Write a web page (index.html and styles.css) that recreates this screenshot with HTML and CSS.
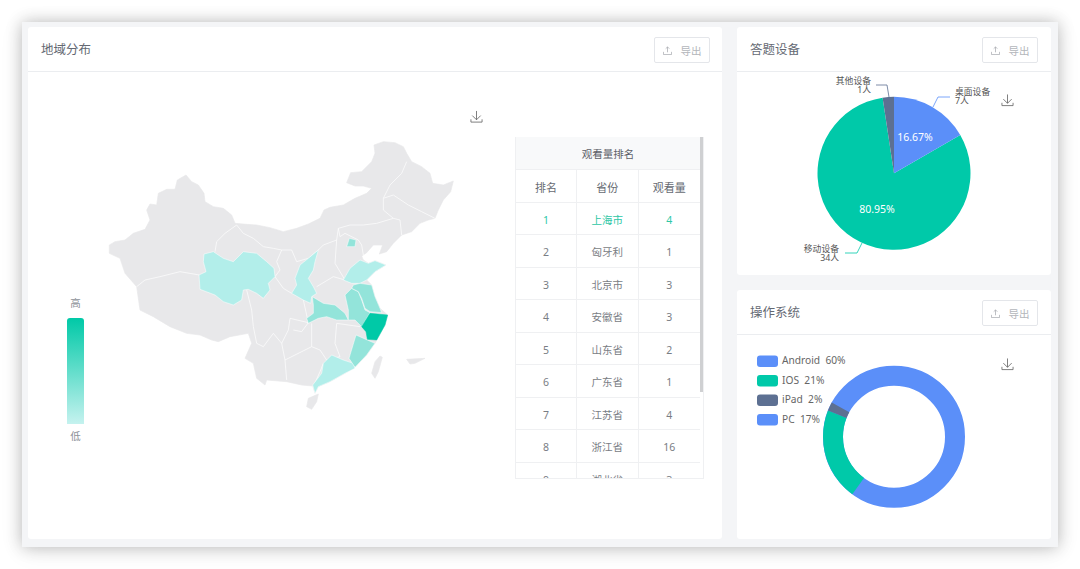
FILE: index.html
```html
<!DOCTYPE html>
<html lang="zh-CN">
<head>
<meta charset="utf-8">
<title>数据统计</title>
<link rel="stylesheet" href="styles.css">
</head>
<body>
<main class="frame">
  <section class="card card-map">
    <header class="card-head">
      <h2 class="card-title">地域分布</h2>
      <button class="export"><svg class="up-icon" viewBox="0 0 10 10"><path d="M5 7V1M3 3l2-2 2 2M.5 6.500v3h9v-3"/></svg>导出</button>
    </header>
    <div class="map-body">
      <div class="scale">
        <span>高</span>
        <div class="scale-bar"></div>
        <span>低</span>
      </div>
      <svg class="map" viewBox="0 0 1110 870">
        <path class="land" d="M28 345L45 335 75 330 100 310 135 298 150 270 140 240 150 222 170 225 175 190 200 178 225 178 232 150 258 135 275 155 295 165 312 190 315 215 340 230 370 235 395 255 405 280 440 283 470 285 510 293 550 305 590 295 625 282 660 265 672 240 690 232 730 225 765 205 800 190 815 175 790 168 765 168 740 158 752 128 785 125 815 95 825 70 822 45 850 35 885 38 910 50 920 70 935 95 965 110 990 130 998 160 1030 165 1060 153 1052 185 1030 210 1015 240 1005 265 985 270 960 280 935 305 905 315 880 340 860 365 838 372 848 345 820 345 800 368 785 378 790 390 805 400 825 392 858 405 825 425 800 450 815 465 825 500 840 535 863 555 855 585 825 640 800 675 765 712 735 730 690 755 655 770 645 790 638 768 605 765 560 755 500 750 495 765 470 745 460 700 435 685 455 640 445 610 390 620 355 635 335 630 300 615 260 610 210 590 160 560 120 540 110 470 75 430 60 385 28 370Z"/>
        <path class="land" d="M625 805L655 792 650 815 635 838 620 830ZM840 678L847 682 835 725 825 745 815 730 825 695ZM920 688L975 685 945 700 930 702Z"/>
        <path class="line" d="M110 470L135 450 180 440 240 425 298 435M345 365L350 335 375 310 410 285 430 310 460 325 490 350 520 355 545 360 575 360 590 395 625 385 655 360 670 345 710 330 715 295 750 285 790 285 830 280 880 265 900 270 905 315M850 205L850 240 880 265M850 205L880 195 925 225 965 245 1005 265M850 205L870 165 905 130 920 95M715 295L720 320 735 310 775 330 785 345 790 375M545 360L530 395 540 420 525 440 550 475 575 490M710 330L705 400 735 450M650 470L700 440 735 450M440 480L455 540 460 590 470 640 490 650 520 610 545 640 565 600 570 565 625 578 610 510M625 578L605 605 580 600M545 640L555 690 635 650 660 660 680 690 720 680 705 640 710 580 780 590M635 580L635 650M555 690L560 750M670 700L660 725 640 770"/>
        <path class="tint-a" d="M312 372L340 365 370 385 400 395 430 365 470 370 500 395 522 415 525 440 505 460 510 480 490 505 470 490 445 478 430 480 425 510 400 525 370 515 345 495 300 478 297 435 318 425 310 395Z"/>
        <path class="tint-a" d="M655 360L645 395 640 420 625 445 640 470 650 490 635 500 632 520 610 510 575 490 590 465 585 445 600 405 625 385Z"/>
        <path class="tint-a" d="M730 450L750 415 780 390 805 400 825 392 858 405 825 425 800 450 780 460 755 460Z"/>
        <path class="tint-a" d="M670 700L695 675 730 690 760 700 765 715 735 730 690 755 655 770 645 790 638 765 665 730Z"/>
        <path class="tint-b" d="M748 325L768 330 765 350 740 350Z"/>
        <path class="tint-b" d="M637 500L670 520 705 525 735 550 745 570 710 570 680 560 655 565 625 580 620 565 640 550 640 525Z"/>
        <path class="tint-b" d="M735 495L755 475 775 485 785 510 795 540 810 548 785 590 765 570 745 570 745 540Z"/>
        <path class="tint-b" d="M780 460L815 465 825 500 840 535 845 548 810 545 795 535 785 505 775 485 755 475 760 465Z"/>
        <path class="tint-b" d="M768 615L802 630 825 640 800 675 765 712 747 685Z"/>
        <path class="tint-c" d="M785 590L810 550 863 555 855 585 830 630 802 628 798 605Z"/>
      </svg>
      <svg class="save map-save" viewBox="0 0 14 14"><path d="M7 .5V10M2.500 5.500L7 10l4.500-4.500M1 9.500v3h12v-3"/></svg>
      <div class="rank">
        <div class="rank-inner">
          <div class="rank-title">观看量排名</div>
          <div class="rank-row rank-head"><span>排名</span><span>省份</span><span>观看量</span></div>
          <div class="rank-row rank-first"><span>1</span><span>上海市</span><span>4</span></div>
          <div class="rank-row"><span>2</span><span>匈牙利</span><span>1</span></div>
          <div class="rank-row"><span>3</span><span>北京市</span><span>3</span></div>
          <div class="rank-row"><span>4</span><span>安徽省</span><span>3</span></div>
          <div class="rank-row"><span>5</span><span>山东省</span><span>2</span></div>
          <div class="rank-row"><span>6</span><span>广东省</span><span>1</span></div>
          <div class="rank-row"><span>7</span><span>江苏省</span><span>4</span></div>
          <div class="rank-row"><span>8</span><span>浙江省</span><span>16</span></div>
          <div class="rank-row"><span>9</span><span>湖北省</span><span>3</span></div>
        </div>
        <div class="rank-thumb"></div>
      </div>
    </div>
  </section>
  <div class="side">
    <section class="card card-device">
      <header class="card-head">
        <h2 class="card-title">答题设备</h2>
        <button class="export"><svg class="up-icon" viewBox="0 0 10 10"><path d="M5 7V1M3 3l2-2 2 2M.5 6.500v3h9v-3"/></svg>导出</button>
      </header>
      <svg class="chart" viewBox="737 72 314 203">
        <path class="c-green" d="M894 173.300L960.250 135.050A76.500 76.500 0 1 1 882.600 97.650Z"/>
        <path class="c-blue" d="M894 173.300V96.800A76.500 76.500 0 0 1 960.250 135.050Z"/>
        <path class="c-gray" d="M894 173.300L882.600 97.650A76.500 76.500 0 0 1 894 96.800Z"/>
        <path class="lead lead-gray" d="M876 85H887L889 97"/>
        <path class="lead lead-blue" d="M933 107L938 97H950"/>
        <path class="lead lead-green" d="M862 243L857 253H845"/>
        <text class="lbl end" x="871" y="84">其他设备</text>
        <text class="lbl end" x="871" y="92.500">1人</text>
        <text class="lbl" x="955" y="95">桌面设备</text>
        <text class="lbl" x="955" y="103.500">7人</text>
        <text class="lbl end" x="839" y="252">移动设备</text>
        <text class="lbl end" x="839" y="261">34人</text>
        <text class="pct" x="915" y="141">16.67%</text>
        <text class="pct" x="877" y="213">80.95%</text>
        <svg class="save" x="1001" y="94" width="13" height="13" viewBox="0 0 14 14"><path d="M7 .5V10M2.500 5.500L7 10l4.500-4.500M1 9.500v3h12v-3"/></svg>
      </svg>
    </section>
    <section class="card card-os">
      <header class="card-head">
        <h2 class="card-title">操作系统</h2>
        <button class="export"><svg class="up-icon" viewBox="0 0 10 10"><path d="M5 7V1M3 3l2-2 2 2M.5 6.500v3h9v-3"/></svg>导出</button>
      </header>
      <svg class="chart chart-os" viewBox="737 335 314 204">
        <g class="ring">
          <circle class="ring-blue" cx="894" cy="436.700" r="61" pathLength="100"/>
          <circle class="ring-green" cx="894" cy="436.700" r="61" pathLength="100"/>
          <circle class="ring-gray" cx="894" cy="436.700" r="61" pathLength="100"/>
        </g>
        <rect class="c-blue" x="757" y="355.500" width="21" height="11.500" rx="3"/>
        <rect class="c-green" x="757" y="375" width="21" height="11.500" rx="3"/>
        <rect class="c-gray" x="757" y="394.500" width="21" height="11.500" rx="3"/>
        <rect class="c-blue" x="757" y="414" width="21" height="11.500" rx="3"/>
        <text class="legend" x="782" y="364">Android  60%</text>
        <text class="legend" x="782" y="383.500">IOS  21%</text>
        <text class="legend" x="782" y="403">iPad  2%</text>
        <text class="legend" x="782" y="422.500">PC  17%</text>
        <svg class="save" x="1001" y="358" width="13" height="13" viewBox="0 0 14 14"><path d="M7 .5V10M2.500 5.500L7 10l4.500-4.500M1 9.500v3h12v-3"/></svg>
      </svg>
    </section>
  </div>
</main>
</body>
</html>
```
FILE: styles.css
```css
* { box-sizing: border-box; }
html, body { margin: 0; height: 100%; }
body {
  background: #fff;
  padding: 22px;
  font-family: "Noto Sans", "Noto Sans CJK SC", sans-serif;
  overflow: hidden;
}
.frame {
  width: 1036px;
  height: 525px;
  padding: 5px 7px 8px 6px;
  display: flex;
  gap: 15px;
  background: #f4f5f7;
  box-shadow: 0 0 15px rgba(0, 0, 0, .24), 0 4px 24px rgba(0, 0, 0, .07);
}
.card-map { width: 694px; }
.card-map .card-head { padding-right: 12px; }
.side {
  width: 314px;
  display: flex;
  flex-direction: column;
  gap: 15px;
}
.card-device { height: 248px; }
.card-os { height: 249px; }
.card {
  background: #fff;
  border-radius: 3px;
  overflow: hidden;
}
.card-head {
  height: 45px;
  padding: 2px 13px 0;
  display: flex;
  align-items: center;
  justify-content: space-between;
  border-bottom: 1px solid #ebedf0;
}
.card-title {
  margin: 0 0 4px;
  font-size: 12.500px;
  font-weight: 400;
  color: #646973;
}
.export {
  width: 56px;
  height: 26px;
  padding: 0;
  display: flex;
  align-items: center;
  justify-content: center;
  gap: 9px;
  background: #fff;
  border: 1px solid #e4e6ea;
  border-radius: 2px;
  font: inherit;
  font-size: 10.500px;
  color: #b3b6bb;
}
.up-icon {
  width: 9px;
  height: 9px;
  fill: none;
  stroke: #a4a7ad;
  stroke-width: .8;
}
.map-body {
  display: flex;
  align-items: flex-start;
  padding-left: 39px;
}
.scale {
  width: 17px;
  margin-top: 224px;
  margin-right: 16px;
  display: flex;
  flex-direction: column;
  align-items: center;
  font-size: 10.500px;
  line-height: 15px;
  color: #8d9198;
}
.scale-bar {
  width: 17px;
  height: 106px;
  margin: 7px 0 5px;
  border-radius: 3px 3px 0 0;
  background: linear-gradient(#00c9a7, #c5f2ef);
}
.map {
  width: 370px;
  height: 290px;
  margin-top: 58px;
  flex: none;
}
.land {
  fill: #e8e8ea;
  stroke: #e8e8ea;
  stroke-width: 2;
  stroke-linejoin: round;
}
.line {
  fill: none;
  stroke: #fff;
  stroke-width: 2;
  stroke-linejoin: round;
}
.tint-a, .tint-b, .tint-c {
  stroke: #fff;
  stroke-width: 1.500;
  stroke-linejoin: round;
}
.tint-a { fill: #b2eeea; }
.tint-b { fill: #93e4da; }
.tint-c { fill: #00c9a7; stroke: #00c9a7; }
.save {
  fill: none;
  stroke: #666;
  stroke-width: .9;
}
.map-save {
  width: 13px;
  height: 14px;
  margin-top: 38px;
  margin-right: 32px;
  flex: none;
}
.rank {
  position: relative;
  width: 189px;
  height: 342px;
  margin-top: 65px;
  overflow: hidden;
  border: 1px solid #eff0f2;
  border-top: 0;
  flex: none;
}
.rank-inner { width: 184px; }
.rank-title {
  height: 33px;
  line-height: 35px;
  text-align: center;
  font-size: 10.500px;
  color: #5c6068;
  background: #f8f9fa;
  border-bottom: 1px solid #eff0f2;
}
.rank-row {
  height: 32.500px;
  display: grid;
  grid-template-columns: 61px 61.500px 61.500px;
  text-align: center;
  font-size: 10.500px;
  color: #797d84;
  border-bottom: 1px solid #eff0f2;
}
.rank-row span {
  padding-top: 2px;
  line-height: 31px;
  border-right: 1px solid #eff0f2;
}
.rank-row span:last-child { border-right: 0; }
.rank-head { font-size: 11px; color: #666a72; }
.rank-first { color: #2ec7a6; }
.rank-thumb {
  position: absolute;
  top: 0;
  right: 0;
  width: 3px;
  height: 255px;
  background: #cfd0d2;
}
.chart {
  display: block;
  width: 314px;
  height: 203px;
}
.chart-os { height: 204px; }
.c-blue { fill: #5b8ff9; }
.c-green { fill: #00c9a9; }
.c-gray { fill: #5d7092; }
.lead { fill: none; stroke-width: .8; }
.lead-gray { stroke: #5d7092; }
.lead-blue { stroke: #5b8ff9; }
.lead-green { stroke: #00c9a9; }
.lbl {
  font-size: 8.800px;
  fill: #555;
}
.end { text-anchor: end; }
.pct {
  font-size: 10.500px;
  fill: #fff;
  text-anchor: middle;
}
.ring circle {
  fill: none;
  stroke-width: 20;
}
.ring-blue { stroke: #5b8ff9; }
.ring-green {
  stroke: #00c9a9;
  stroke-dasharray: 21 79;
  stroke-dashoffset: -35;
}
.ring-gray {
  stroke: #5d7092;
  stroke-dasharray: 2 98;
  stroke-dashoffset: -56;
}
.legend {
  font-size: 10.200px;
  fill: #666;
  white-space: pre;
}
```
